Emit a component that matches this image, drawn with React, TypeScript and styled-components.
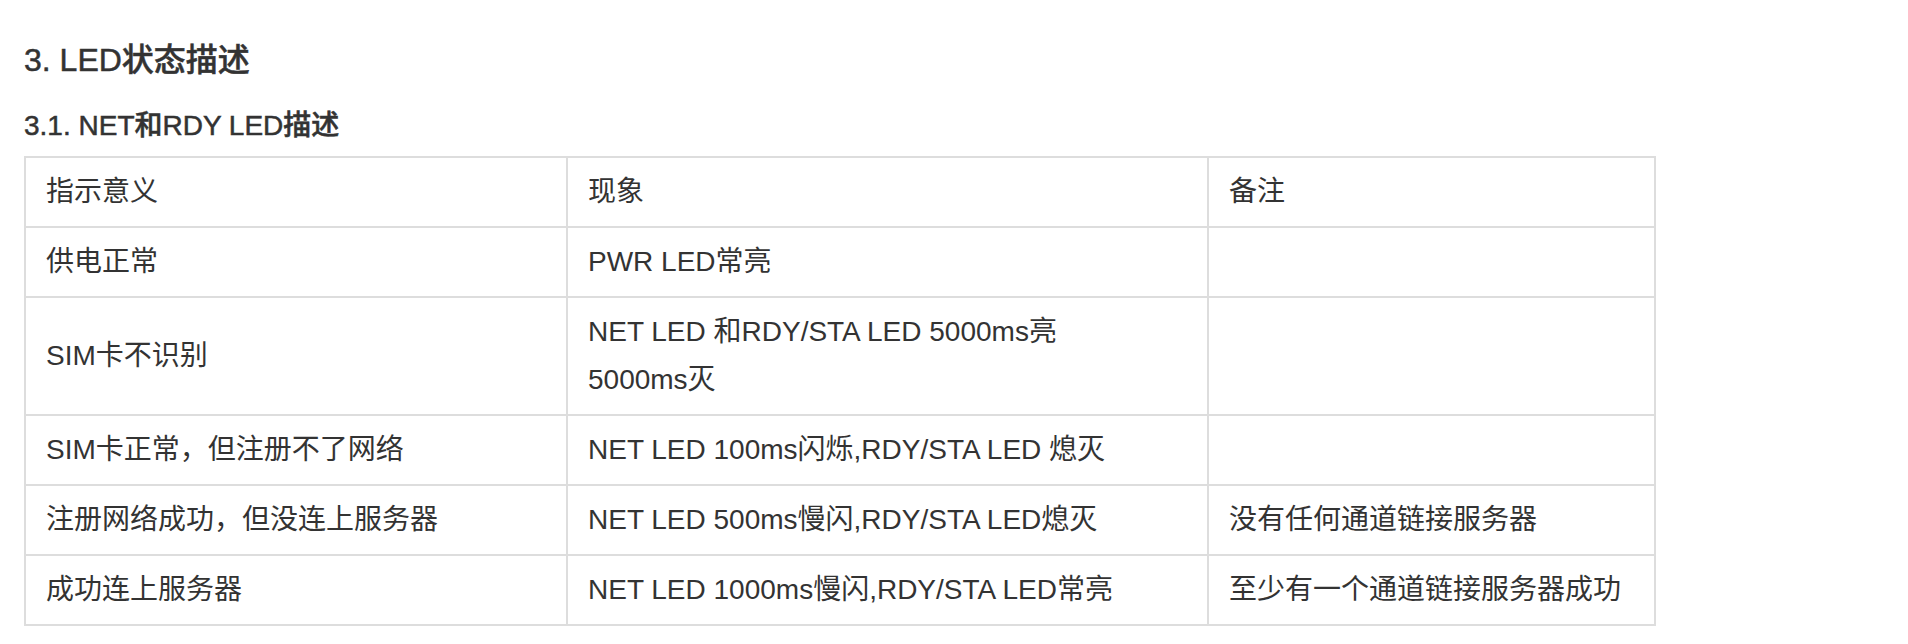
import { createGlobalStyle, styled } from "styled-components";

const GlobalStyle = createGlobalStyle`
  body {
    margin: 0;
    background: #ffffff;
    font-family: "Liberation Sans", "Noto Sans CJK SC", sans-serif;
    color: #333333;
  }
`;

const Page = styled.div`
  padding: 38px 24px 20px;
`;

const Title = styled.h2`
  margin: 0;
  font-size: 32px;
  line-height: 44px;
  font-weight: 500;
  color: #333333;
  -webkit-text-stroke: 0.5px #333333;
`;

const SubTitle = styled.h3`
  margin: 24px 0 10px;
  font-size: 28px;
  line-height: 40px;
  font-weight: 500;
  color: #333333;
  -webkit-text-stroke: 0.5px #333333;
`;

const Table = styled.table`
  border-collapse: collapse;
  width: 1630px;
  table-layout: fixed;
  font-size: 28px;
  line-height: 48px;
`;

const Cell = styled.td`
  border: 2px solid #dddddd;
  padding: 10px 20px;
  text-align: left;
  vertical-align: middle;
  font-weight: 400;
  color: #333333;
`;

const HeadCell = styled(Cell).attrs({ as: "th" })``;

interface Row {
  meaning: string;
  state: string[];
  note: string;
}

const rows: Row[] = [
  { meaning: "供电正常", state: ["PWR LED常亮"], note: "" },
  {
    meaning: "SIM卡不识别",
    state: ["NET LED 和RDY/STA LED 5000ms亮", "5000ms灭"],
    note: "",
  },
  {
    meaning: "SIM卡正常，但注册不了网络",
    state: ["NET LED 100ms闪烁,RDY/STA LED 熄灭"],
    note: "",
  },
  {
    meaning: "注册网络成功，但没连上服务器",
    state: ["NET LED 500ms慢闪,RDY/STA LED熄灭"],
    note: "没有任何通道链接服务器",
  },
  {
    meaning: "成功连上服务器",
    state: ["NET LED 1000ms慢闪,RDY/STA LED常亮"],
    note: "至少有一个通道链接服务器成功",
  },
];

function App() {
  return (
    <>
      <GlobalStyle />
      <Page>
        <Title>3. LED状态描述</Title>
        <SubTitle>3.1. NET和RDY LED描述</SubTitle>
        <Table>
          <colgroup>
            <col style={{ width: 542 }} />
            <col style={{ width: 641 }} />
            <col style={{ width: 447 }} />
          </colgroup>
          <thead>
            <tr>
              <HeadCell>指示意义</HeadCell>
              <HeadCell>现象</HeadCell>
              <HeadCell>备注</HeadCell>
            </tr>
          </thead>
          <tbody>
            {rows.map((r) => (
              <tr key={r.meaning}>
                <Cell>{r.meaning}</Cell>
                <Cell>
                  {r.state.map((line, i) => (
                    <span key={line}>
                      {i > 0 && <br />}
                      {line}
                    </span>
                  ))}
                </Cell>
                <Cell>{r.note}</Cell>
              </tr>
            ))}
          </tbody>
        </Table>
      </Page>
    </>
  );
}

export default App;
